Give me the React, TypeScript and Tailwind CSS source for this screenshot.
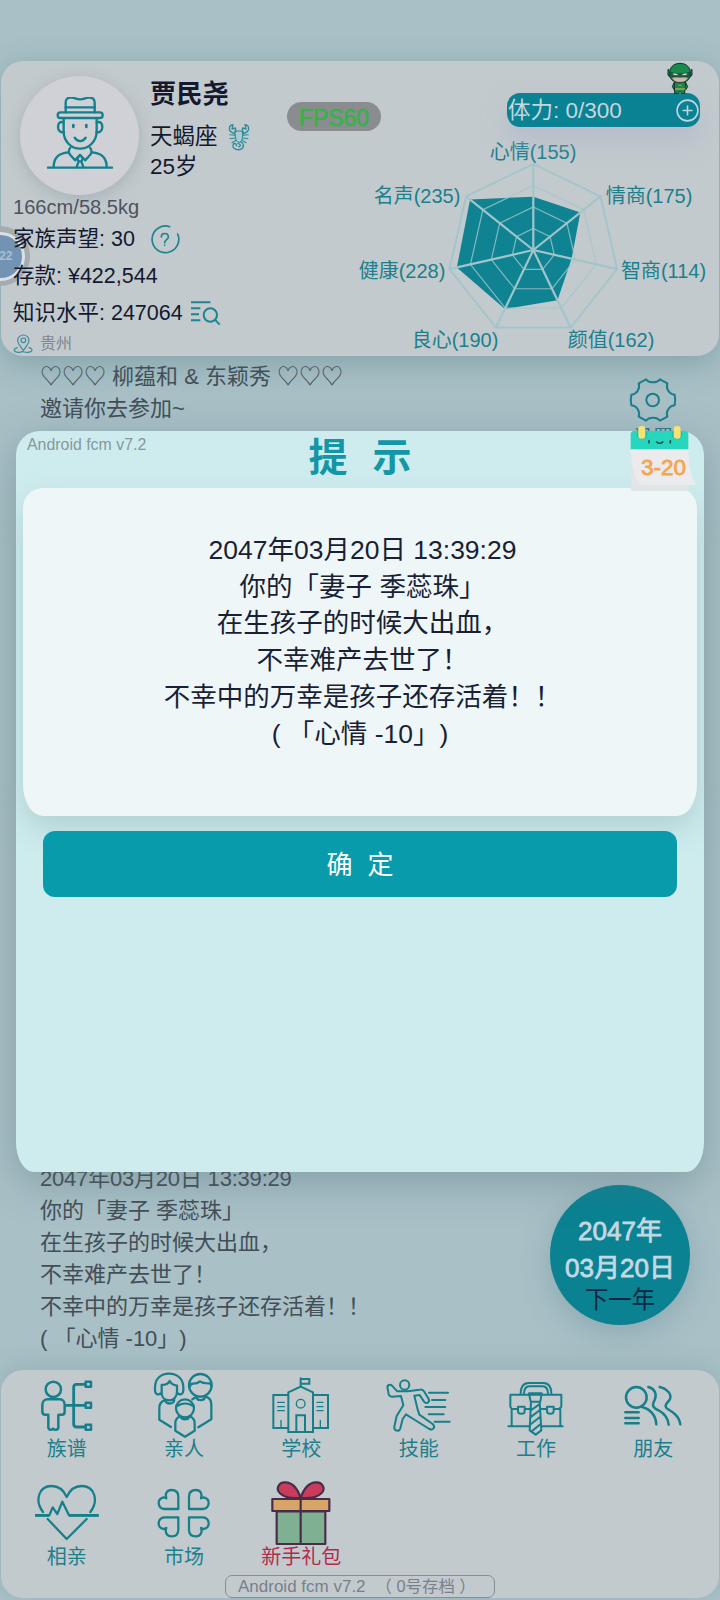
import type { ReactNode } from 'react'

const FONT = "font-['Liberation_Sans','Noto_Sans_CJK_SC',sans-serif] [text-spacing-trim:space-all]"

const stats = [
  { name: '心情', value: 155, x: 533, y: 159 },
  { name: '情商', value: 175, x: 649, y: 202.5 },
  { name: '智商', value: 114, x: 663.5, y: 277.5 },
  { name: '颜值', value: 162, x: 611, y: 347 },
  { name: '良心', value: 190, x: 455, y: 347 },
  { name: '健康', value: 228, x: 402, y: 277.5 },
  { name: '名声', value: 235, x: 417, y: 202.5 },
]

const CX = 533.3
const CY = 250
const RADIUS = 86
const MAX = 250

function point(index: number, ratio: number) {
  const angle = (index * 2 * Math.PI) / stats.length
  return [CX + RADIUS * ratio * Math.sin(angle), CY - RADIUS * ratio * Math.cos(angle)]
}

function RadarChart() {
  const ring = (ratio: number) => stats.map((_, i) => point(i, ratio).join(',')).join(' ')
  const area = stats.map((s, i) => point(i, s.value / MAX).join(',')).join(' ')
  return (
    <svg className="block" width="366" height="228" viewBox="352 128 366 228">
      <polygon points={area} fill="#0f8392" />
      <g fill="none" stroke="#a2c5cb">
        {[0.25, 0.5, 0.75].map((r) => (
          <polygon key={r} points={ring(r)} strokeWidth="1.2" opacity="0.8" />
        ))}
        <polygon points={ring(1)} strokeWidth="1.9" />
        {stats.map((s, i) => {
          const [x, y] = point(i, 1)
          return <line key={s.name} x1={CX} y1={CY} x2={x} y2={y} strokeWidth="2.2" />
        })}
      </g>
      {stats.map((s) => (
        <text key={s.name} x={s.x} y={s.y} textAnchor="middle" fontSize="20" fill="#1c7f8c">
          {s.name}({s.value})
        </text>
      ))}
    </svg>
  )
}

function Avatar() {
  return (
    <svg width="68" height="76" viewBox="138 142 204 228" fill="none" stroke="#12818e" strokeWidth="7" strokeLinecap="round" strokeLinejoin="round">
      <path d="M197 188V158c0-12 8-15 18-14 12 1 14 5 25 5s14-4 26-5c10-1 18 3 18 14v30" />
      <path d="M197 173h87" />
      <rect x="173" y="188" width="135" height="17" rx="8.5" />
      <path d="M191 207v38c0 30 22 52 49 52s50-22 50-52v-38" />
      <path d="M191 218c-12-4-17 4-17 14s7 18 18 16M290 218c12-4 17 4 17 14s-7 18-18 16" />
      <path d="M220 226v6M259 226v6" strokeWidth="8" />
      <path d="M224 264c8 14 25 14 33 0" />
      <path d="M144 354h192M161 352c0-28 16-42 44-44M320 352c0-28-16-42-44-44" />
      <path d="M211 294c-6 8-6 14-2 20l16 18 15-16 16 16 16-18c4-6 4-12-2-20" />
      <path d="M240 316l-9 10 5 9-6 17M240 316l9 10-5 9 6 17M236 335h8" />
    </svg>
  )
}

function Scorpion() {
  return (
    <svg width="22" height="28" viewBox="682 213 66 84" fill="none" stroke="#2b8b99" strokeWidth="4" strokeLinecap="round" strokeLinejoin="round">
      <path d="M697 218c-12 1-14 14-7 21l12 7M697 218l-3 13 10-3c3 7 1 11-3 14M733 218c12 1 14 14 7 21l-12 7M733 218l3 13-10-3c-3 7-1 11 3 14" />
      <path d="M704 240l7-3h8l7 3-1 20c-1 7-5 11-10 11s-9-4-10-11z" fill="#a9cdd2" strokeWidth="3" />
      <path d="M703 250l-16-2M704 258l-16 2M706 265l-12 7M727 250l16-2M726 258l16 2M724 265l12 7" strokeWidth="3.2" />
      <path d="M721 270c11 6 9 21-5 23-12 2-22-6-19-14 2-7 12-5 10 2M712 275c9 1 9 9 2 9" />
    </svg>
  )
}

function Hero() {
  return (
    <svg width="26" height="32" viewBox="951 36 78 96" stroke="#16302c" strokeWidth="3" strokeLinejoin="round">
      <path d="M972 98l-5 12 6 10M1007 98l6 12-6 10" fill="#178a4c" />
      <path d="M973 96h34l-3 34h-9l-5-7-5 7h-11z" fill="#178a4c" />
      <path d="M975 117h30" stroke="#c9a93a" strokeWidth="4" />
      <path d="M958 60l-4-2v18l8 7M1022 60l4-2v18l-8 7" fill="#178a4c" />
      <path d="M959 74c-2-22 12-34 31-34s33 12 31 34c-1 15-13 24-31 24s-30-9-31-24z" fill="#178a4c" />
      <path d="M965 83c6 11 14 14 25 14s19-3 25-14c-14-5-36-5-50 0z" fill="#cdbba8" strokeWidth="1.5" />
      <path d="M962 67c18 6 38 6 56 0v11c-18 5-38 5-56 0z" fill="#2c5a4c" strokeWidth="1.5" />
      <path d="M970 72l12 2M998 74l12-2" stroke="#d8dcdc" strokeWidth="4" />
      <path d="M985 106h10" stroke="#5fbf7d" />
    </svg>
  )
}

function Header() {
  return (
    <header className="relative mx-px mt-[61px] flex h-[295px] shrink-0 rounded-[22px] bg-[#c3cace] shadow-[0_8px_30px_rgba(70,110,120,0.35)]">
      {/* floating counter docked to the screen edge, under the labels */}
      <div className="absolute -left-[31px] top-[165px] flex size-[60px] items-center justify-center rounded-full bg-[#a5acb0]">
        <div className="flex size-[49px] items-center justify-end rounded-full border-[3px] border-[#dbe0e6] bg-[#7393b5] pr-[9px] text-[12px] font-bold text-[#a9bdd2]">22</div>
      </div>
      <div className="absolute left-[286px] top-[41px] flex h-[29px] w-[94px] items-center justify-center rounded-full bg-[#898d90] pt-[4px] text-[23px] text-[#38b14a] [-webkit-text-stroke:0.6px_#38b14a]">
        FPS60
      </div>

      <div className="relative w-[351px] shrink-0">
        <div className="flex h-[134px] pl-[19px]">
          <div className="mt-[15px] flex size-[119px] items-center justify-center rounded-full bg-[#cfd1d6] pb-[2px] shadow-[0_4px_16px_rgba(120,140,150,0.4)]">
            <Avatar />
          </div>
          <div className="ml-[11px] pt-[18px] text-[22.5px] leading-[30px] text-[#14192f]">
            <div className="text-[26.3px] font-bold">贾民尧</div>
            <div className="mt-[13px] flex items-center gap-[10px]">
              天蝎座 <Scorpion />
            </div>
            <div>25岁</div>
          </div>
        </div>
        <div className="pl-[12px] text-[21.5px] text-[#14192f]">
          <div className="h-[26px] text-[20.1px] leading-[25px] text-[#4d5360]">166cm/58.5kg</div>
          <div className="flex h-[36.7px] items-center">
            家族声望: 30
            <svg className="ml-[15px]" width="30" height="30" viewBox="450 100 90 90" fill="none" stroke="#1d8490" strokeWidth="5" strokeLinecap="round">
              <path d="M533 130a40 40 0 1 1-24-22" />
              <path d="M484 139c0-14 21-14 21 0 0 8-11 8-11 17M494 163v1" />
            </svg>
          </div>
          <div className="flex h-[36.7px] items-center">存款: ¥422,544</div>
          <div className="flex h-[36.7px] items-center">
            知识水平: 247064
            <svg className="ml-[7px]" width="31" height="26" viewBox="571 326 93 78" fill="none" stroke="#1d8490" strokeWidth="6">
              <path d="M574 333h58M574 351h28M574 369h24M574 387h28" />
              <circle cx="632" cy="371" r="20" />
              <path d="M646 385l14 15" />
            </svg>
          </div>
          <div className="flex h-[25px] items-center text-[16px] text-[#7f8690]">
            <svg className="mr-[7px]" width="20" height="20" viewBox="40 429 60 60" fill="none" stroke="#3e8b9a" strokeWidth="3.6" strokeLinecap="round">
              <path d="M71 478c-9-12-17-20-17-30a17 16 0 0 1 34 0c0 10-8 18-17 30z" />
              <circle cx="71" cy="448" r="7" />
              <path d="M53 470c-14 4-12 13 3 14 6 1 6-2 12-2s8 3 16 2c15-1 18-10 4-14" />
            </svg>
            贵州
          </div>
        </div>
      </div>

      <div className="flex flex-col">
        <div className="relative ml-[155px] mt-[32px] flex h-[34px] w-[193px] items-center justify-between rounded-[13px] bg-[#0a8294] pl-px pr-px text-[22.5px] text-[#c5d6de] shadow-[0_14px_24px_rgba(170,180,200,0.6)]">
          <span className="pt-px">体力: 0/300</span>
          <svg width="23" height="23" viewBox="0 0 23 23" fill="none" stroke="#bcd6dd" strokeWidth="1.6">
            <circle cx="11.5" cy="11.5" r="10.4" />
            <path d="M11.5 6.5v10M6.5 11.5h10" />
          </svg>
          <div className="absolute -top-[31px] left-[160px]">
            <Hero />
          </div>
        </div>
        <div className="mt-px">
          <RadarChart />
        </div>
      </div>
    </header>
  )
}

const birthLog = [
  '2047年03月20日 13:39:29',
  '你的「妻子 季蕊珠」',
  '在生孩子的时候大出血，',
  '不幸难产去世了！',
  '不幸中的万幸是孩子还存活着！！',
  '( 「心情 -10」)',
]

function LogArea() {
  return (
    <main className="flex flex-1 justify-between pl-10 pr-[30px]">
      <div className="flex flex-col justify-between pb-[15px] pt-[5px] text-[22px] leading-[32px] text-[#434e57]">
        <div>
          <p>♡♡♡ 柳蕴和 & 东颖秀 ♡♡♡</p>
          <p>邀请你去参加~</p>
        </div>
        <div>
          {birthLog.map((line) => (
            <p key={line} className="whitespace-pre first:tracking-[-0.2px]">{line}</p>
          ))}
        </div>
      </div>
      <div className="flex w-[140px] flex-col items-center justify-between pb-[45px] pt-[20px]">
        <div className="ml-[66px] text-center text-[20px] leading-[28px] text-[#1c7f8c]">
          <svg width="50" height="48" viewBox="205 48 150 144" fill="none" stroke="#1a7f8c" strokeWidth="6" strokeLinejoin="round">
            <path d="M259 58C268 70 292 70 301 58L323 70C318 86 328 102 345 104C347 114 347 126 345 136C328 138 318 154 323 170L301 182C292 170 268 170 259 182L237 170C242 154 232 138 215 136C213 126 213 114 215 104C232 102 242 86 237 70Z" />
            <circle cx="279" cy="120" r="19" />
          </svg>
          设置
        </div>
        <div className="flex size-[140px] flex-col items-center rounded-full bg-[#0a8292] pt-[28px] text-[26px] leading-[37px] text-[#c3d9e2] shadow-[0_8px_30px_rgba(90,125,140,0.35)]">
          <span className="[-webkit-text-stroke:0.8px_#c3d9e2]">2047年</span>
          <span className="[-webkit-text-stroke:0.8px_#c3d9e2]">03月20日</span>
          <span className="text-[23.3px] leading-[26px] text-[#0a2640]">下一年</span>
        </div>
      </div>
    </main>
  )
}

function NavIcon({ box, width = 6, children }: { box: string; width?: number; children: ReactNode }) {
  return (
    <svg className="block size-[68px]" viewBox={box} fill="none" stroke="#167f8a" strokeWidth={width} strokeLinecap="round" strokeLinejoin="round">
      {children}
    </svg>
  )
}

const navItems = [
  {
    label: '族谱',
    icon: (
      <NavIcon box="99 33 204 204" width={7.5}>
        <circle cx="160" cy="88" r="23" />
        <path d="M145 166v36c0 8 10 10 14 4 5 6 16 4 16-4v-36M145 164h-9c-6 0-9-4-9-9v-20c0-10 7-17 16-17h36c9 0 15 7 15 17v20c0 5-3 9-8 9h-10" />
        <path d="M196 136h60M256 73h-26c-6 0-9 3-9 9v110c0 6 3 9 9 9h26" strokeWidth="8.5" />
        <rect x="257" y="65" width="16" height="15" />
        <rect x="257" y="128" width="16" height="15" />
        <rect x="257" y="194" width="16" height="15" />
      </NavIcon>
    ),
  },
  {
    label: '亲人',
    icon: (
      <NavIcon box="451 33 204 204" width={6.8}>
        <path d="M486 99c-14 9-20 1-20-8V82c0-26 18-41 42-41s43 15 43 41v9c0 9-6 17-19 8M486 99V75c12 0 20-4 24-12 4 8 10 12 22 14v18c0 14-9 26-23 26s-23-9-23-22z" />
        <circle cx="602" cy="76" r="34" />
        <path d="M571 80c0-6 4-9 10-9 9 0 15-2 20-7 8 6 16 6 27 6 5 0 7 4 7 10M590 110c1 14 25 14 26 0M578 118l8-5M618 110c12 3 17 12 17 24v44l-39 24" />
        <path d="M497 120c2 14 24 14 27 0M494 121c-10 4-15 11-15 22v36l35 22" />
        <circle cx="556" cy="145" r="27" />
        <path d="M534 137c14-8 32-8 44 0M543 169c2 12 24 12 26 0M541 169c-9 4-14 11-14 21v22l29 18 29-18v-22c0-10-5-17-14-21" />
      </NavIcon>
    ),
  },
  {
    label: '学校',
    icon: (
      <NavIcon box="803 33 204 204">
        <path d="M867 216V97l37-17 37 17v119zM867 105h-45v99h45M941 105h45v99h-45M904 80V55M906 57h24v14h-24M891 216v-50h26v50" strokeLinejoin="miter" />
        <circle cx="904" cy="131" r="13" strokeWidth="4" />
        <path d="M835 127h20M835 140h20M835 152h20M953 127h18M953 140h18M953 152h18M845 181v21M963 181v21" strokeWidth="4" />
      </NavIcon>
    ),
  },
  {
    label: '技能',
    icon: (
      <NavIcon box="75 33 204 204">
        <circle cx="134" cy="75" r="14" />
        <path d="M112 94h31l36-5c6-1 10 1 13 5l14 23c5 10-8 16-14 8l-13-20-16 2 9 38 6 19 40 28c10 9 1 20-10 15l-48-30-22-14-10 14-7 28c-4 12-20 8-18-5l7-32 20-32-7-28-27 2c-6 0-8-2-10-6L83 86c-4-11 9-16 15-7z" />
        <path d="M207 98h57M216 120h40M196 141h60M206 163h45M224 185h45" />
      </NavIcon>
    ),
  },
  {
    label: '工作',
    icon: (
      <NavIcon box="427 33 204 204">
        <path d="M483 102c0-22 8-33 24-33h44c16 0 24 11 24 33M493 102c0-16 6-23 16-23h40c10 0 16 7 16 23" />
        <path d="M452 104h153v36l-7 7h-15M456 198v-51l-4-7v-36M475 147h-15M495 147h16M546 147h16M602 147v51M446 199h64M546 199h63M475 140h20v14c0 10-20 10-20 0zM562 140h20v14c0 10-20 10-20 0z" />
        <path d="M508 100h38l-4 25h-29zM514 125l-4 86 18 13 17-13-5-86M515 150l24-17M512 172l29-22M511 194l31-24M517 213l27-22" />
      </NavIcon>
    ),
  },
  {
    label: '朋友',
    icon: (
      <NavIcon box="778 33 204 204" width={7.5}>
        <circle cx="830" cy="112" r="31" />
        <path d="M797 157h40M797 174h40M797 190h40M845 140c27 7 43 27 45 53M866 81c18 4 26 20 20 36-3 8-6 11-6 18 0 8 8 12 20 18 16 9 25 24 27 41M900 81c20 4 37 20 31 36-3 8-15 14-13 23 1 7 11 9 20 16 13 9 22 22 24 37" />
      </NavIcon>
    ),
  },
  {
    label: '相亲',
    icon: (
      <NavIcon box="99 27 204 204" width={6.8}>
        <path d="M129 126c-26-34-13-78 26-78 22 0 37 15 45 33 8-18 23-33 45-33 39 0 52 44 26 78M143 147l57 60 60-60" />
        <path d="M105 136h43l10-24 14 20 15-37 20 41h89" strokeLinecap="butt" />
        <path d="M105 136h43M207 136h89" strokeWidth="8" strokeLinecap="butt" />
      </NavIcon>
    ),
  },
  {
    label: '市场',
    icon: (
      <NavIcon box="451 27 204 204" width={6.8}>
        <path d="M536 117h-42c-20-2-24-29-3-35 4 0 6 1 9 3-5-14 2-25 15-25 14 0 21 8 21 20z" />
        <path d="M568 117h42c20-2 24-29 3-35-4 0-6 1-9 3 5-14-2-25-15-25-14 0-21 8-21 20z" />
        <path d="M536 142h-42c-20 2-24 29-3 35 4 0 6-1 9-3-5 14 2 25 15 25 14 0 21-8 21-20z" />
        <path d="M568 142h42c20 2 24 29 3 35-4 0-6-1-9-3 5 14-2 25-15 25-14 0-21-8-21-20z" />
      </NavIcon>
    ),
  },
  {
    label: '新手礼包',
    gift: true,
    icon: (
      <NavIcon box="803 27 204 204" width={6.5}>
        <g stroke="#482d4a">
          <path d="M832 124h146v98H832z" fill="#7fb092" />
          <path d="M819 87h171v36H819z" fill="#d8a568" />
          <path d="M904 84c-26 2-50-2-62-14-14-14-4-34 16-33 22 1 38 22 46 47zM904 84c26 2 50-2 62-14 14-14 4-34-16-33-22 1-38 22-46 47z" fill="#cb3c5c" />
          <path d="M904 84v138" />
        </g>
      </NavIcon>
    ),
  },
]

function BottomNav() {
  return (
    <nav className="relative mx-px mb-[2px] h-[228px] shrink-0 rounded-[22px] bg-[#c3cace] px-[7px] pt-px shadow-[0_-4px_24px_rgba(80,120,130,0.2)]">
      <div className="grid grid-cols-6 gap-y-[18px]">
        {navItems.map((item) => (
          <div key={item.label} className="flex h-[90px] flex-col items-center">
            {item.icon}
            <span className={`-mt-px whitespace-nowrap text-[20px] leading-[22px] ${item.gift ? 'text-[#b02a4d]' : 'text-[#1c7f8c]'}`}>
              {item.label}
            </span>
          </div>
        ))}
      </div>
      <div className="absolute bottom-0 left-[224px] flex h-[23px] w-[270px] items-center gap-[10px] whitespace-pre rounded-[7px] border border-[#868d98] pl-[12px] text-[16.4px] text-[#79808a]">
        <span className="text-[17px]">Android fcm v7.2</span>
        <span>（ 0号存档 ）</span>
      </div>
    </nav>
  )
}

function CalendarBadge() {
  return (
    <div className="absolute left-[611px] top-[-6px] h-[70px] w-[72px]">
      <svg className="absolute inset-0" width="72" height="70" viewBox="200 195 216 210">
        <path d="M211 268v117c0 6 3 8 8 8h160l8-10z" fill="#e2e5e7" />
        <path d="M211 266h173c2 50 6 80 22 103 0 5-4 7-10 7H254c-28 0-38-40-43-110z" fill="#ebebee" />
        <path d="M211 268V224c0-8 4-11 10-11h152c7 0 11 4 11 11v44z" fill="#26d6bd" />
        <circle cx="245" cy="222" r="16" fill="#18bfae" />
        <circle cx="350" cy="222" r="16" fill="#18bfae" />
        <rect x="234" y="198" width="21" height="38" rx="9" fill="#f8e273" />
        <rect x="340" y="198" width="21" height="38" rx="9" fill="#f8e273" />
        <path d="M266 242v6M330 242v6M289 246c4 5 14 5 18 0" stroke="#14524f" strokeWidth="5" strokeLinecap="round" fill="none" />
      </svg>
      <span className="absolute left-[14px] top-[30px] text-[22.5px] leading-[26px] text-[#f5a54f] [-webkit-text-stroke:0.8px_#f5a54f]">3-20</span>
    </div>
  )
}

function NoticeDialog() {
  return (
    <div className="absolute left-[16px] top-[431px] flex h-[741px] w-[688px] flex-col rounded-[24px_24px_18px_18px/24px_24px_30px_30px] bg-[#ceecee] px-[7px] shadow-[0_10px_40px_rgba(80,110,120,0.4)]">
      <div className="relative flex h-[57px] items-center justify-center">
        <span className="absolute left-[4px] top-[4px] text-[15.9px] leading-[20px] text-[#86989b]">Android fcm v7.2</span>
        <h1 className="flex gap-[25px] pb-[4px] text-[39px] font-bold leading-none text-[#1396a5]">
          <span>提</span>
          <span>示</span>
        </h1>
      </div>
      <div className="h-[328px] w-[674px] rounded-[20px_20px_20px_20px/20px_20px_32px_32px] bg-[#eef6f8] pl-[5px] pt-[44px] text-center text-[26.5px] leading-[36.7px] text-[#1a1f33] shadow-[0_14px_30px_rgba(140,170,170,0.4)]">
        {birthLog.map((line) => (
          <p key={line} className="whitespace-pre last:-ml-[5px]">{line}</p>
        ))}
      </div>
      <button className="relative mx-[20px] mt-[15px] flex h-[66px] items-center justify-center gap-[15px] rounded-[12px] bg-[#089bab] pt-[2px] text-[26px] text-white">
        <span>确</span>
        <span>定</span>
      </button>
      <CalendarBadge />
    </div>
  )
}

export default function App() {
  return (
    <div className={`relative flex h-[1600px] w-[720px] flex-col overflow-hidden bg-[#a8c0c6] ${FONT}`}>
      <Header />
      <LogArea />
      <BottomNav />
      <NoticeDialog />
    </div>
  )
}
